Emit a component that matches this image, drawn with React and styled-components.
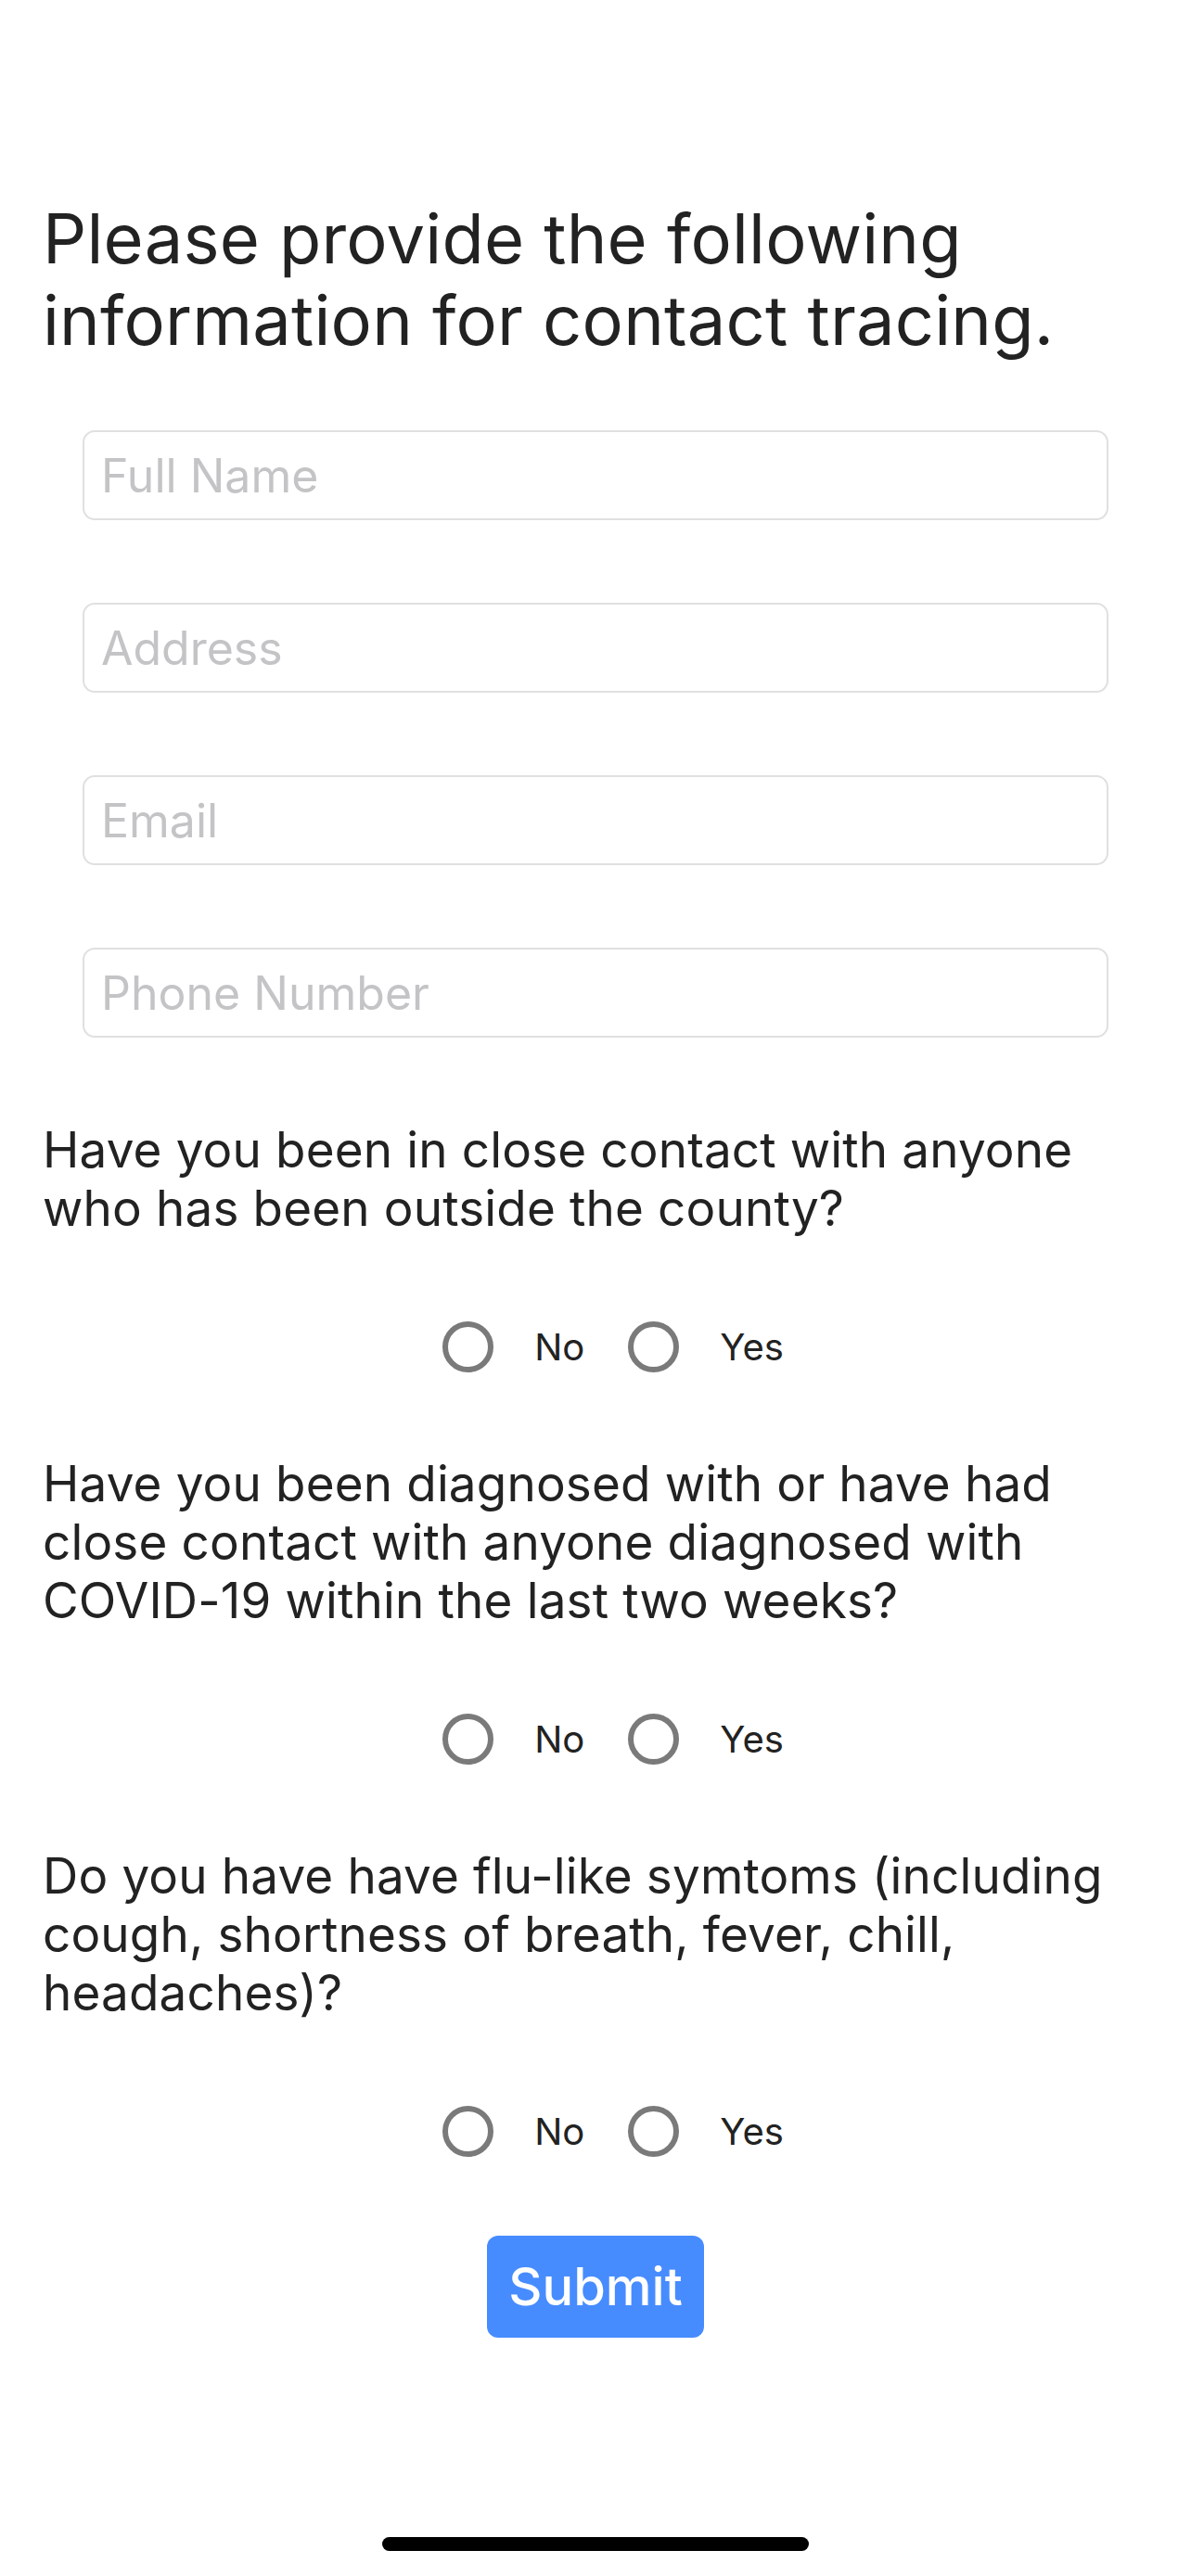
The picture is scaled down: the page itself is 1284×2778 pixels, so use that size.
import React from "react";
import styled, { createGlobalStyle } from "styled-components";

const GlobalStyle = createGlobalStyle`
  html, body {
    margin: 0;
    padding: 0;
    background: #ffffff;
  }
  body {
    font-family: Inter, "Liberation Sans", Arial, sans-serif;
    color: #222222;
  }
  * {
    box-sizing: border-box;
  }
`;

const Page = styled.div`
  width: 1284px;
  min-height: 2778px;
  display: flex;
  flex-direction: column;
  padding: 213px 46px 0;
`;

const Title = styled.h1`
  margin: 0;
  font-size: 74px;
  font-weight: 400;
  line-height: 88px;
  letter-spacing: 0.2px;
  color: #222222;
`;

const Fields = styled.div`
  display: flex;
  flex-direction: column;
  gap: 89px;
  margin: 75px 43px 0;
`;

const Input = styled.input`
  height: 97px;
  width: 100%;
  border: 2px solid #e0e0e0;
  border-radius: 13px;
  padding: 0 18px;
  font-family: inherit;
  font-size: 50px;
  color: #222222;
  outline: none;
  &::placeholder {
    color: #c4c4c6;
  }
`;

const Questions = styled.div`
  display: flex;
  flex-direction: column;
  gap: 87px;
  margin-top: 90px;
`;

const Question = styled.p`
  margin: 0;
  font-size: 53px;
  line-height: 63px;
  letter-spacing: 0.15px;
  color: #222222;
`;

const RadioRow = styled.div`
  display: flex;
  justify-content: center;
  align-items: center;
  height: 60px;
  padding-left: 38px;
`;

const Option = styled.label`
  display: flex;
  align-items: center;
  gap: 44px;
  margin-right: ${(p) => (p.$last ? 0 : 47)}px;
  font-size: 40px;
  color: #222222;
`;

const Circle = styled.span`
  width: 55px;
  height: 55px;
  border-radius: 50%;
  border: 6px solid #7a7a7a;
  background: #ffffff;
`;

const SubmitButton = styled.button`
  align-self: center;
  margin-top: 83px;
  width: 234px;
  height: 110px;
  border: none;
  border-radius: 12px;
  background: #478cff;
  color: #ffffff;
  font-family: inherit;
  font-size: 56px;
  font-weight: 500;
`;

const HomeBar = styled.div`
  align-self: center;
  margin-top: auto;
  margin-bottom: 27px;
  width: 460px;
  height: 15px;
  border-radius: 8px;
  background: #000000;
`;

const questions = [
  "Have you been in close contact with anyone who has been outside the county?",
  "Have you been diagnosed with or have had close contact with anyone diagnosed with COVID-19 within the last two weeks?",
  "Do you have have flu-like symtoms (including cough, shortness of breath, fever, chill, headaches)?",
];

const fields = ["Full Name", "Address", "Email", "Phone Number"];

export default function App() {
  return (
    <>
      <GlobalStyle />
      <Page>
        <Title>Please provide the following information for contact tracing.</Title>
        <Fields>
          {fields.map((f) => (
            <Input key={f} placeholder={f} />
          ))}
        </Fields>
        <Questions>
          {questions.map((q) => (
            <React.Fragment key={q}>
              <Question>{q}</Question>
              <RadioRow>
                <Option>
                  <Circle />
                  No
                </Option>
                <Option $last>
                  <Circle />
                  Yes
                </Option>
              </RadioRow>
            </React.Fragment>
          ))}
        </Questions>
        <SubmitButton>Submit</SubmitButton>
        <HomeBar />
      </Page>
    </>
  );
}
